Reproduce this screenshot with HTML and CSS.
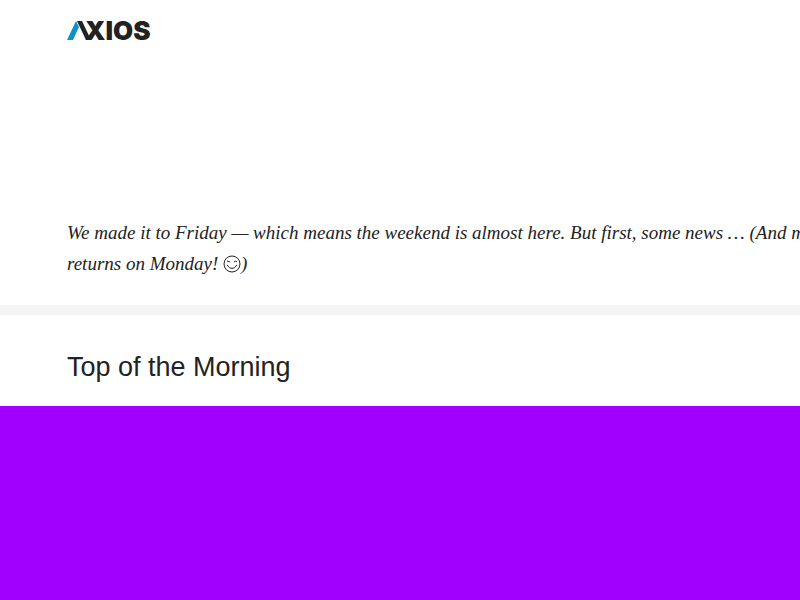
FILE: index.html
```
<!DOCTYPE html>
<html lang="en">
<head>
<meta charset="utf-8">
<title>Axios</title>
<link rel="stylesheet" href="styles.css">
</head>
<body>
<header class="masthead">
  <a class="logo" href="#" aria-label="Axios">
    <svg width="84" height="24" viewBox="0 0 84 24" aria-hidden="true">
      <path class="logo-accent" d="M0 21 9 2 12 8 6 21z"/>
      <path class="logo-ink" d="M10 2h5l9 19h-5z"/>
      <text class="logo-text" x="18" y="21">XIOS</text>
    </svg>
  </a>
</header>
<main>
  <section class="intro">
    <p>We made it to Friday — which means the weekend is almost here. But first, some news … (And m<br>returns on Monday!
      <svg class="wink" width="18" height="18" viewBox="0 0 18 18" role="img" aria-label="Winking face">
        <circle cx="9" cy="9" r="8"/>
        <path d="M4 6l3 1M11 7q2-2 3 0M4 10q5 7 10 0"/>
      </svg>)</p>
  </section>
  <section class="story">
    <h2>Top of the Morning</h2>
    <div class="hero"></div>
  </section>
</main>
</body>
</html>
```
FILE: styles.css
```
* { box-sizing: border-box; }
body {
  display: flex;
  flex-direction: column;
  min-height: 100vh;
  margin: 0;
  background: #fff;
  color: #222;
}
.masthead { padding: 19px 67px 0; height: 217px; }
.logo { display: inline-block; }
.logo svg { display: block; overflow: visible; }
.logo-accent { fill: #0a93c8; }
.logo-ink, .logo-text { fill: #222; }
.logo-text { font: 900 26px Inter, sans-serif; }
main { display: flex; flex: 1; flex-direction: column; }
.intro {
  overflow: hidden;
  padding: 0 0 26px 67px;
  border-bottom: 10px solid #f4f4f4;
}
.intro p {
  margin: 0;
  font: italic 19px/31px Georgia, "Liberation Serif", serif;
  white-space: nowrap;
}
.wink {
  vertical-align: -3px;
  fill: none;
  stroke: #222;
  stroke-width: 1;
}
.story { display: flex; flex: 1; flex-direction: column; }
.story h2 {
  margin: 0;
  padding: 36px 67px 23px;
  font: 400 27px/32px "Liberation Sans", sans-serif;
}
.hero { flex: 1; min-height: 194px; background: #a100ff; }
```
